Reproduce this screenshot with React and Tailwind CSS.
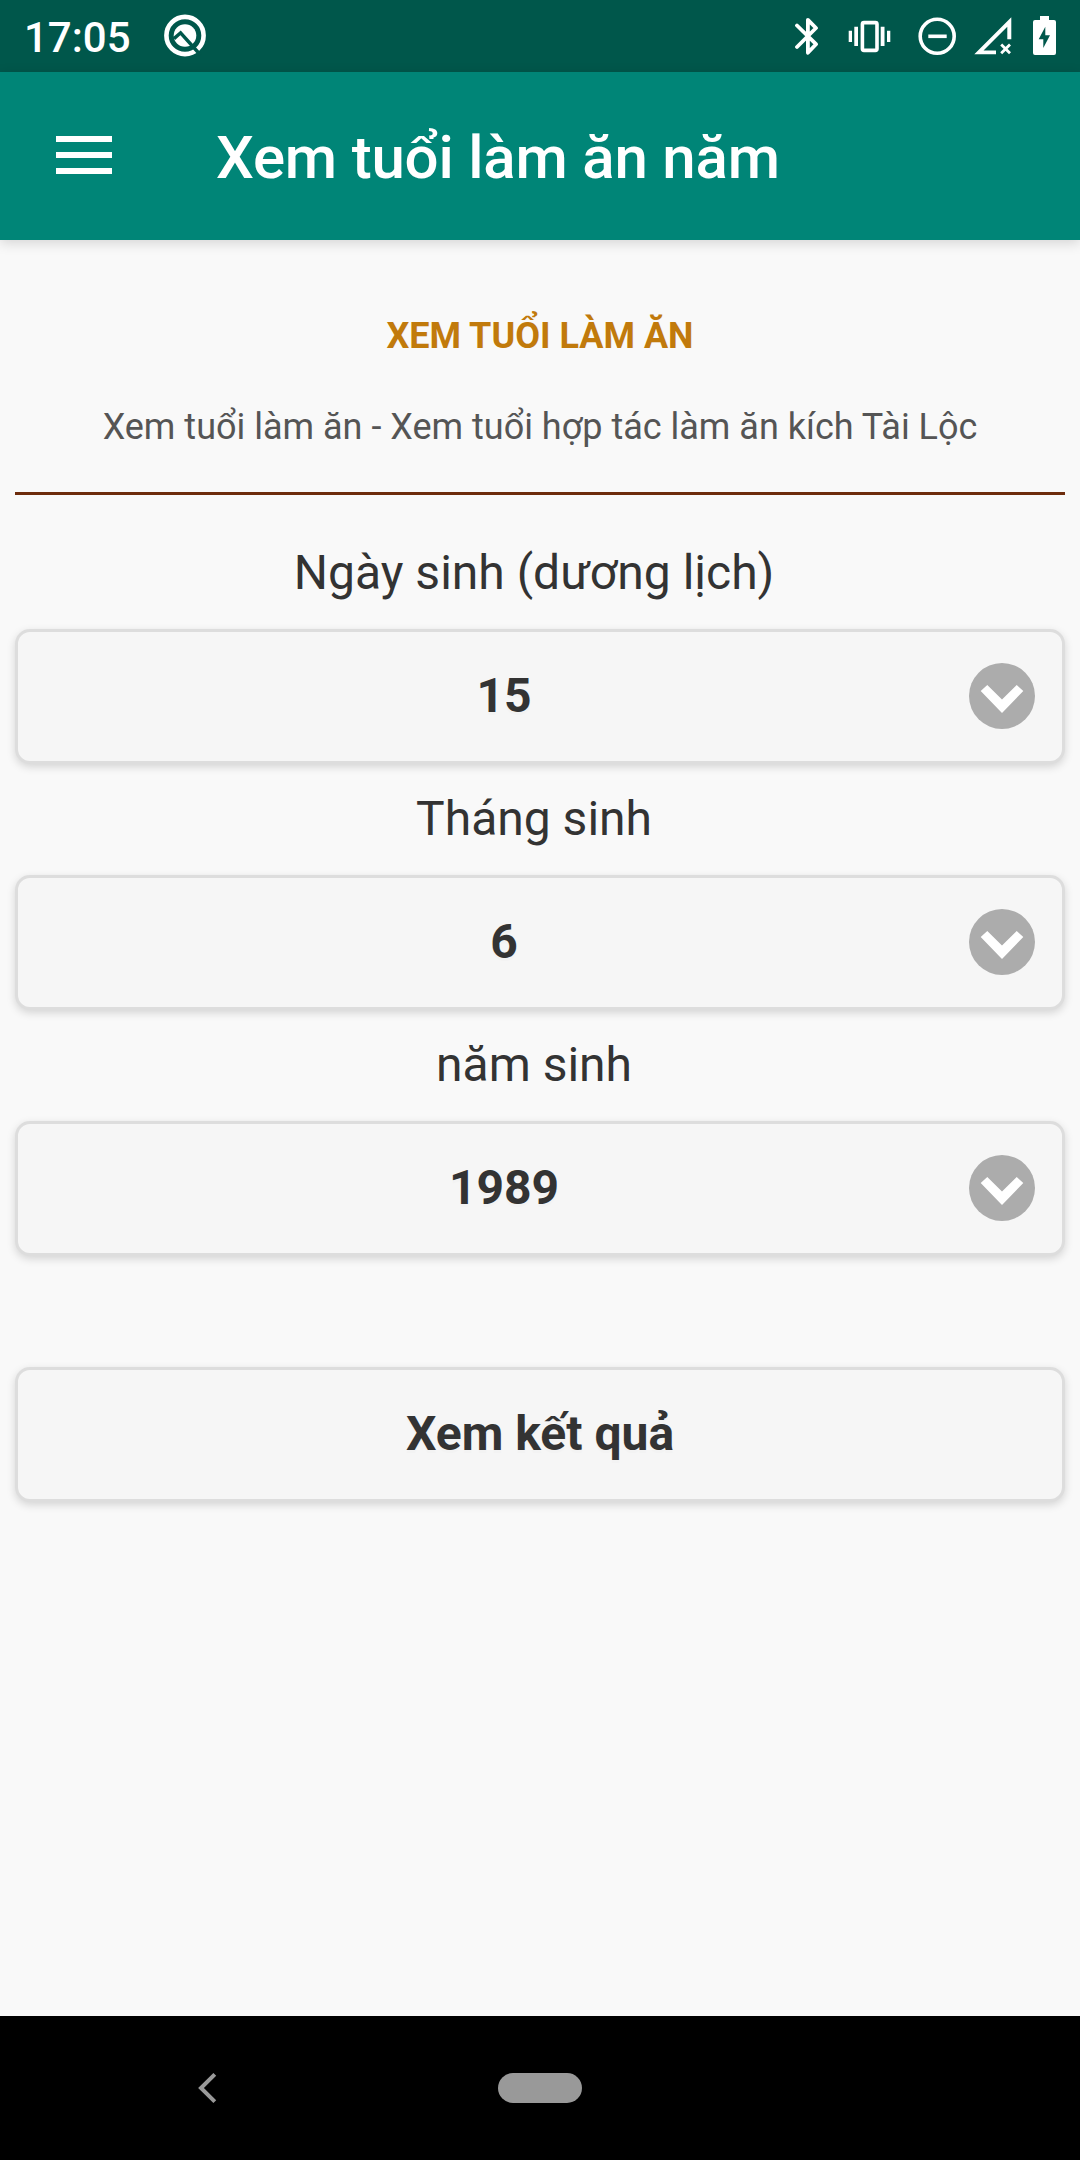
const fields = [
  { label: "Ngày sinh (dương lịch)", value: "15" },
  { label: "Tháng sinh", value: "6" },
  { label: "năm sinh", value: "1989" },
];

function StatusBar() {
  return (
    <div className="flex h-[72px] items-start bg-[#00574b] text-white">
      <span className="ml-6 mt-[13px] w-[140px] text-[42px] font-medium leading-[49px]">17:05</span>
      <svg className="mt-[14px]" width="42" height="43" viewBox="0 0 42 43" fill="none">
        <circle cx="21" cy="21.5" r="18.6" stroke="#fff" strokeWidth="4.6" />
        <circle cx="21" cy="21.5" r="11.3" fill="#fff" />
        <path d="M10 24.6l6.6-5.8L36.5 41" stroke="#00574b" strokeWidth="3.4" />
      </svg>

      <svg className="ml-[589px] mt-[17px]" width="24" height="39" viewBox="0 0 24 39" fill="none" stroke="#fff" strokeWidth="3.8" strokeLinecap="round" strokeLinejoin="round">
        <path d="M2 8.5L21 27.2L12.9 35.8V2.8L21 11L2 30" />
      </svg>
      <svg className="ml-[29px] mt-5" width="43" height="33" viewBox="0 0 43 33" fill="#fff">
        <path d="M.7 10.7H4V22H.7zM6.3 6.7H10V26H6.3zM32.7 6.7h3.8V26h-3.8zM39 10.7h3.3V22H39z" />
        <rect x="14.4" y="2.6" width="14.6" height="27.8" rx="1.6" fill="none" stroke="#fff" strokeWidth="3.6" />
      </svg>
      <svg className="ml-[27px] mt-[17px]" width="39" height="39" viewBox="0 0 39 39" fill="none" stroke="#fff" strokeWidth="3.6">
        <circle cx="19.2" cy="19.3" r="17" />
        <path d="M10.3 19.3h18.4" />
      </svg>
      <svg className="ml-[17px] mt-[17px]" width="38" height="39" viewBox="0 0 38 39" fill="#fff">
        <path d="M.3 37.3l37-37v22h-4V9.7L9.5 33.5H22v3.8z" />
        <path d="M27.2 27.4l8.8 8.8M36 27.4l-8.8 8.8" stroke="#fff" strokeWidth="2.8" />
      </svg>
      <svg className="ml-[21px] mt-4" width="23" height="39" viewBox="0 0 23 39">
        <path d="M7 0h9v4h5a2 2 0 0 1 2 2v31a2 2 0 0 1-2 2H2a2 2 0 0 1-2-2V6a2 2 0 0 1 2-2h5z" fill="#fff" />
        <path d="M12.3 10.7L5.7 23.3h4.6V32L17 19.3h-4.7z" fill="#00574b" />
      </svg>
    </div>
  );
}

function Header() {
  return (
    <header className="relative flex h-[168px] items-start bg-[#008577] pl-14 shadow-[0_3px_12px_rgba(0,0,0,0.15)]">
      <div className="mt-16 flex w-14 flex-col gap-[10px]">
        <span className="h-[6px] bg-white" />
        <span className="h-[6px] bg-white" />
        <span className="h-[6px] bg-white" />
      </div>
      <h1 className="ml-[104px] mt-[51px] text-[60px] font-medium leading-[70px] tracking-[-0.2px] text-white">
        Xem tuổi làm ăn năm
      </h1>
    </header>
  );
}

function SelectButton({ value }) {
  return (
    <button className="relative flex h-[135px] w-full items-center justify-center rounded-[15px] border-[3px] border-[#ddd] bg-[#f6f6f6] pr-[72px] text-[48px] font-bold shadow-[0_3px_9px_rgba(0,0,0,0.15)] [text-shadow:0_3px_0_#f3f3f3]">
      <span className="-mt-[2px]">{value}</span>
      <svg className="absolute right-[27px] top-[31px]" width="66" height="66" viewBox="0 0 66 66">
        <circle cx="33" cy="33" r="33" fill="#acacac" />
        <path d="M11.7 28l6.6-6L33 36.5 47.7 22l6.6 6L33 50z" fill="#fff" />
      </svg>
    </button>
  );
}

export default function App() {
  return (
    <div className="flex h-[2160px] w-[1080px] flex-col overflow-hidden bg-[#f9f9f9] font-['Roboto',sans-serif] text-[#333]">
      <StatusBar />
      <Header />

      <main className="flex-1 px-[15px] text-center">
        <h2 className="mt-[74px] text-[36px] font-bold leading-[44px] text-[#c17a0c]">XEM TUỔI LÀM ĂN</h2>
        <p className="mt-[47px] text-[36px] leading-[44px] text-[#555]">
          Xem tuổi làm ăn - Xem tuổi hợp tác làm ăn kích Tài Lộc
        </p>
        <hr className="mt-[43px] border-t-[3px] border-[#6d2c0c]" />

        <div className="mt-[43px] flex flex-col gap-5">
          {fields.map((field) => (
            <div key={field.label}>
              <label className="mb-[22px] block text-[48px] leading-[69px]">{field.label}&nbsp;</label>
              <SelectButton value={field.value} />
            </div>
          ))}
        </div>

        <button className="mt-[111px] flex h-[135px] w-full items-center justify-center rounded-[15px] border-[3px] border-[#ddd] bg-[#f6f6f6] text-[48px] font-bold shadow-[0_3px_9px_rgba(0,0,0,0.15)] [text-shadow:0_3px_0_#f3f3f3]">
          <span className="-mt-[2px]">Xem kết quả</span>
        </button>
      </main>

      <nav className="flex h-36 items-center bg-black">
        <svg className="ml-[198px]" width="19" height="30" viewBox="0 0 19 30" fill="none" stroke="#999" strokeWidth="4">
          <path d="M16.8 1.4L3 15l13.8 13.6" />
        </svg>
        <span className="ml-[281px] h-[30px] w-[84px] rounded-full bg-[#999]" />
      </nav>
    </div>
  );
}
